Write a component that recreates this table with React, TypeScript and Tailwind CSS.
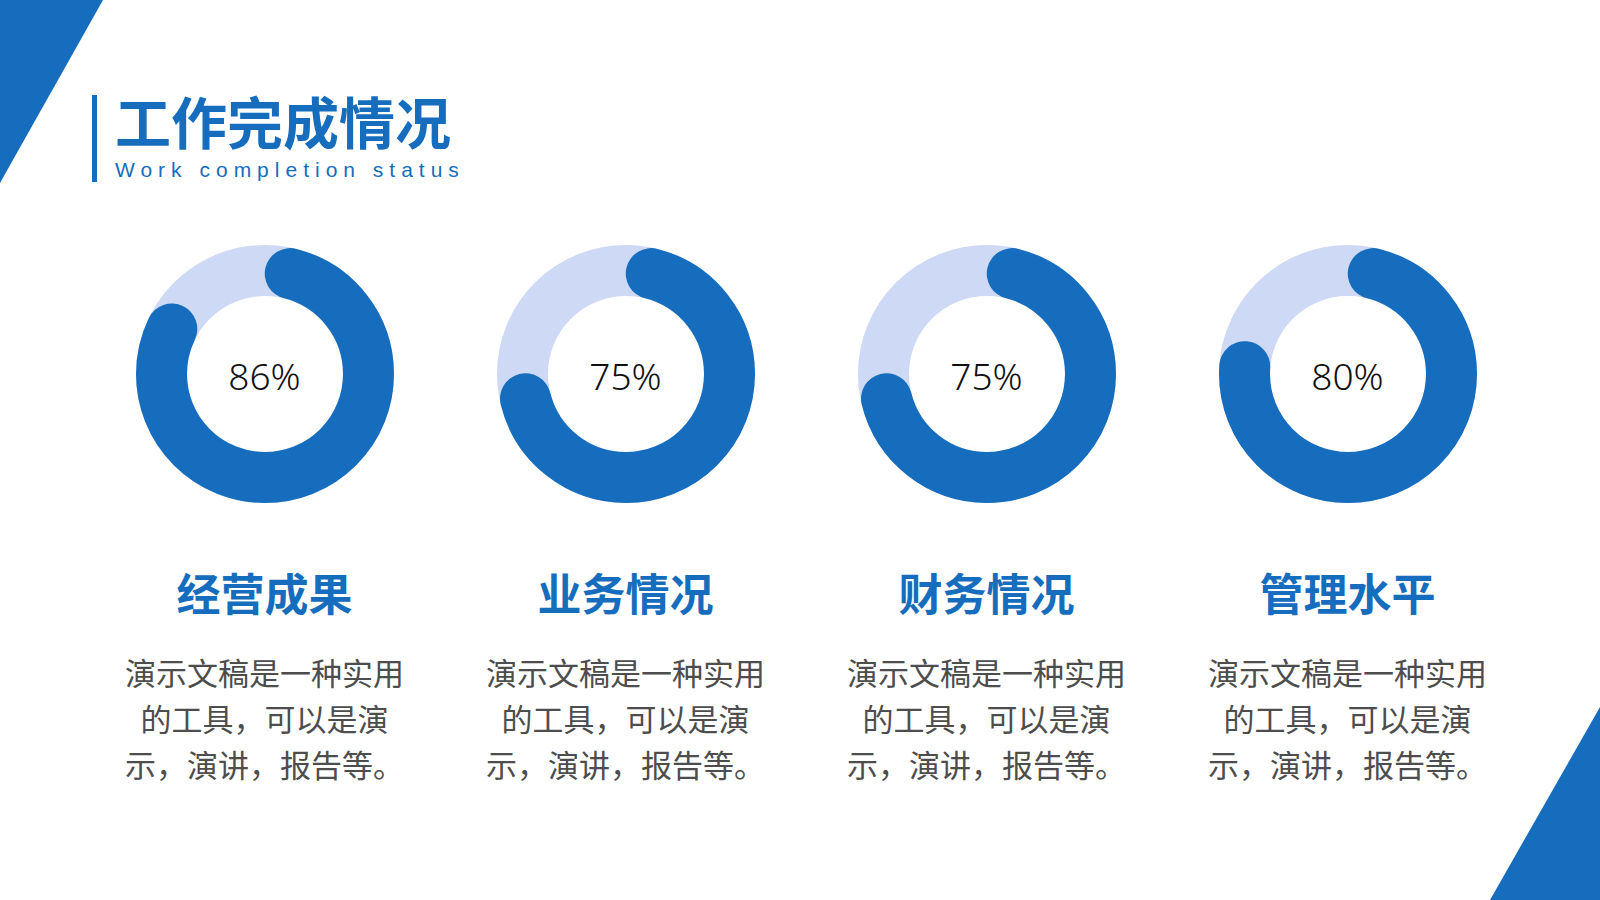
const BLUE = '#166dbd';

const items = [
  { pct: 86, title: '经营成果' },
  { pct: 75, title: '业务情况' },
  { pct: 75, title: '财务情况' },
  { pct: 80, title: '管理水平' },
];

function Ring({ pct }: { pct: number }) {
  const r = 103.5;
  const sw = 51;
  const c = 2 * Math.PI * r;
  const len = (pct / 100) * c - sw;
  return (
    <div className="relative w-[260px] h-[260px]">
      <svg width="260" height="260" viewBox="0 0 260 260">
        <circle cx="130" cy="130" r={r} fill="none" stroke="#cdd9f5" strokeWidth={sw} />
        <circle
          cx="130"
          cy="130"
          r={r}
          fill="none"
          stroke={BLUE}
          strokeWidth={sw}
          strokeLinecap="round"
          strokeDasharray={`${len} ${c}`}
          strokeDashoffset={-sw / 2}
          transform="rotate(-90 130 130)"
        />
      </svg>
      <div className="absolute inset-0 flex items-center justify-center pt-[3px] text-[37px] font-light text-[#111] font-['Noto_Sans','Noto_Sans_CJK_SC',sans-serif]">
        {pct}%
      </div>
    </div>
  );
}

export default function App() {
  return (
    <div className="relative w-[1600px] h-[900px] overflow-hidden bg-white font-['Noto_Sans_CJK_SC',sans-serif]">
      <svg className="absolute left-0 top-0" width="110" height="190" viewBox="0 0 110 190">
        <polygon points="0,0 103,0 0,183" fill={BLUE} />
      </svg>
      <svg className="absolute right-0 bottom-0" width="110" height="193" viewBox="0 0 110 193">
        <polygon points="110,0 110,193 0,193" fill={BLUE} />
      </svg>

      <div className="flex pt-[95px] pl-[92px]">
        <div className="w-[5px] h-[87px] bg-[#166dbd]" />
        <div className="pl-[18px]">
          <h1 className="text-[56px] leading-[56px] font-bold text-[#166dbd] mt-[-3px]">工作完成情况</h1>
          <div className="text-[21px] leading-[24px] tracking-[6px] text-[#166dbd] mt-[10px] font-['Liberation_Sans',sans-serif]">
            Work completion status
          </div>
        </div>
      </div>

      <div className="flex pl-[84px] mt-[62px]">
        {items.map((it, i) => (
          <div key={i} className="w-[361px] flex flex-col items-center">
            <Ring pct={it.pct} />
            <h2 className="mt-[62px] text-[44px] leading-[52px] font-bold text-[#166dbd]">{it.title}</h2>
            <p className="mt-[31px] w-[290px] text-center text-[31px] leading-[46px] text-[#4d4d4d]">
              演示文稿是一种实用的工具，可以是演示，演讲，报告等。
            </p>
          </div>
        ))}
      </div>
    </div>
  );
}
